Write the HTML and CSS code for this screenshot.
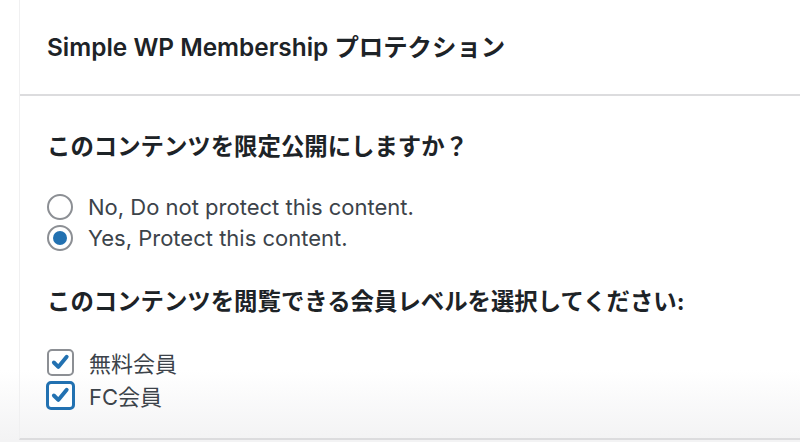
FILE: index.html
```html
<!DOCTYPE html>
<html>

<head>
    <title>Simple WP Membership プロテクション</title>
    <link rel="stylesheet" href="styles.css">
</head>

<body>
    <div class="postbox">
        <div class="postbox-header">
            <h2>Simple WP Membership プロテクション</h2>
        </div>
        <div class="inside">
            <h4>このコンテンツを限定公開にしますか？</h4>
            <div class="options">
                <label class="choice">
                    <span class="radio"></span>
                    No, Do not protect this content.
                </label>
                <label class="choice">
                    <span class="radio checked"></span>
                    Yes, Protect this content.
                </label>
            </div>

            <h4>このコンテンツを閲覧できる会員レベルを選択してください:</h4>
            <div class="options">
                <label class="choice">
                    <span class="checkbox">
                        <svg viewBox="0 0 26 26"><polyline points="5.5,13 10.5,18 20,6.5" /></svg>
                    </span>
                    無料会員
                </label>
                <label class="choice">
                    <span class="checkbox focused">
                        <svg viewBox="0 0 26 26"><polyline points="5.5,13 10.5,18 20,6.5" /></svg>
                    </span>
                    FC会員
                </label>
            </div>
        </div>
    </div>
</body>

</html>
```

FILE: styles.css
```css
html, body {
    height: 100%;
}

body {
    margin: 0;
    font-family: Inter, "Noto Sans CJK JP", sans-serif;
    color: #3c434a;
    background: linear-gradient(to bottom, #fff 0, #fff 370px, #f3f3f4 440px);
}

.postbox {
    margin-left: 19px;
    height: 440px;
    box-sizing: border-box;
    border-left: 1px solid #f0f0f1;
    border-bottom: 2px solid #dcdcde;
}

.postbox-header {
    height: 96px;
    border-bottom: 2px solid #dcdcde;
    display: flex;
    align-items: center;
    padding-left: 27px;
    padding-bottom: 3px;
    box-sizing: border-box;
}

.postbox-header h2 {
    margin: 0;
    font-size: 24.4px;
    font-weight: 600;
    color: #1d2327;
}

.inside {
    padding: 0 27px;
}

h4 {
    margin: 0;
    font-size: 23.4px;
    font-weight: 700;
    color: #1d2327;
}

.inside h4:first-child {
    margin-top: 32px;
}

.options {
    margin: 32px 0 32px;
    display: flex;
    flex-direction: column;
    gap: 5px;
}

.options:last-child {
    margin-top: 32px;
    gap: 7px;
}

.choice {
    display: flex;
    align-items: center;
    gap: 15px;
    font-size: 22px;
    height: 26px;
}

.radio {
    flex: none;
    width: 26px;
    height: 26px;
    box-sizing: border-box;
    border: 2px solid #8c8f94;
    border-radius: 50%;
    display: flex;
    align-items: center;
    justify-content: center;
    background: #fff;
}

.radio.checked::after {
    content: "";
    width: 14px;
    height: 14px;
    border-radius: 50%;
    background: #2271b1;
}

.checkbox {
    flex: none;
    width: 27px;
    height: 27px;
    box-sizing: border-box;
    border: 2px solid #8c8f94;
    border-radius: 5px;
    background: #fff;
    display: flex;
}

.checkbox.focused {
    border: 3px solid #2271b1;
    width: 29px;
    height: 29px;
    margin-left: -1px;
    margin-right: -1px;
}

.checkbox svg {
    width: 100%;
    height: 100%;
    fill: none;
    stroke: #2271b1;
    stroke-width: 4.4;
    stroke-linecap: round;
    stroke-linejoin: round;
}
```
